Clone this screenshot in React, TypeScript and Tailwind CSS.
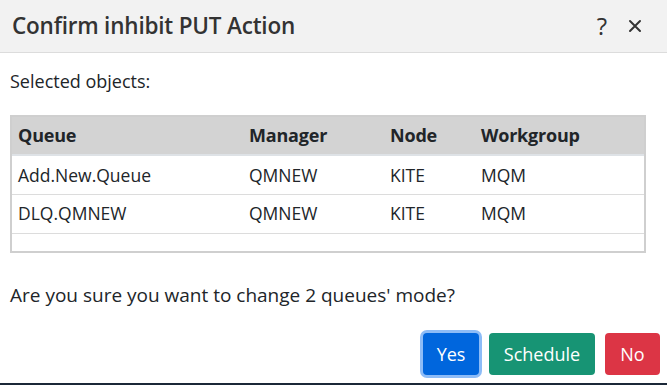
import React from 'react'

const rows = [
    { queue: 'Add.New.Queue', manager: 'QMNEW', node: 'KITE', workgroup: 'MQM' },
    { queue: 'DLQ.QMNEW', manager: 'QMNEW', node: 'KITE', workgroup: 'MQM' },
]

export default function App() {
    return (
        <div
            className="w-[667px] h-[385px] bg-white text-[#212529] flex flex-col overflow-hidden"
            style={{ fontFamily: '"Open Sans", "Noto Sans", sans-serif' }}
        >
            {/* header */}
            <div className="h-[53px] bg-[#f2f2f2] border-b border-[#dcdcdc] flex items-center pl-[12px] pr-[24px] shrink-0">
                <h1 className="flex-1 text-[22.5px] font-semibold tracking-[-0.2px] text-[#333]">Confirm inhibit PUT Action</h1>
                <button type="button" className="text-[24px] text-[#333] leading-none mr-[20px]">?</button>
                <button type="button" className="text-[#333]">
                    <svg width="16" height="16" viewBox="0 0 16 16" fill="none" stroke="currentColor" strokeWidth="2" strokeLinecap="round">
                        <path d="M3 3 L13 13 M13 3 L3 13" />
                    </svg>
                </button>
            </div>

            <div className="flex-1 flex flex-col px-[10px]">
                <p className="text-[18px] mt-[15px] leading-[26px]">Selected objects:</p>

                <div className="mt-[21px] border-2 border-[#cfcfcf] h-[138px] mr-[11px]">
                    <table className="w-full text-[17.5px] border-collapse">
                        <thead>
                            <tr className="bg-[#d3d3d3] h-[38px] border-b-2 border-[#dee2e6] text-left text-[18px]">
                                <th className="font-bold tracking-[-0.2px] pl-[6px] w-[237px]">Queue</th>
                                <th className="font-bold tracking-[-0.2px] w-[141px]">Manager</th>
                                <th className="font-bold tracking-[-0.2px] w-[91px]">Node</th>
                                <th className="font-bold tracking-[-0.2px]">Workgroup</th>
                            </tr>
                        </thead>
                        <tbody>
                            {rows.map((r) => (
                                <tr key={r.queue} className="h-[39px] border-b border-[#dcdcdc]">
                                    <td className="pl-[6px]">{r.queue}</td>
                                    <td>{r.manager}</td>
                                    <td>{r.node}</td>
                                    <td>{r.workgroup}</td>
                                </tr>
                            ))}
                        </tbody>
                    </table>
                </div>

                <p className="text-[19px] mt-[29px] leading-[26px]">Are you sure you want to change 2 queues' mode?</p>

                <div className="flex justify-end gap-[10px] mt-[25px] mr-[-3px]">
                    <button type="button" className="h-[42px] w-[56px] rounded-[4px] bg-[#0066dd] text-white text-[18px] ring-[3px] ring-[#8dbcf7]">Yes</button>
                    <button type="button" className="h-[42px] w-[106px] rounded-[4px] bg-[#179474] text-white text-[18px]">Schedule</button>
                    <button type="button" className="h-[42px] w-[55px] rounded-[4px] bg-[#dc3545] text-white text-[18px]">No</button>
                </div>
            </div>

            <div className="h-[2px] bg-[#1b2838] shrink-0" />
        </div>
    )
}
